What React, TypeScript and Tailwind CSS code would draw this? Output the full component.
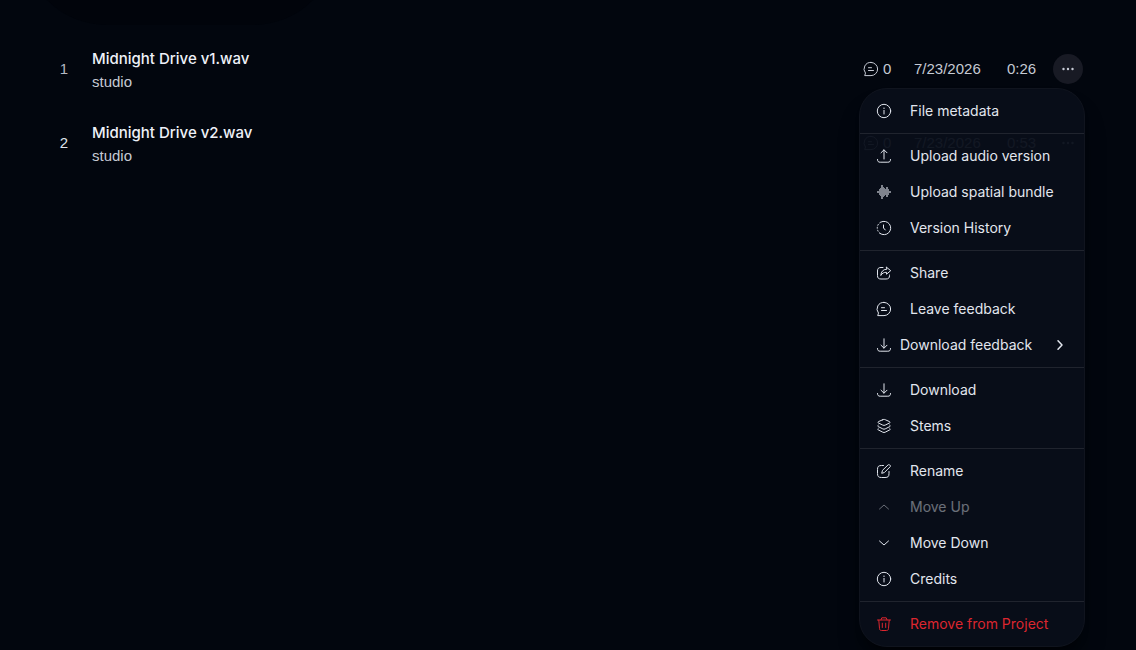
import type { ReactNode } from "react";

type IconName =
  | "info"
  | "upload"
  | "wave"
  | "history"
  | "share"
  | "chat"
  | "download"
  | "layers"
  | "edit"
  | "up"
  | "down"
  | "right"
  | "trash"
  | "dots";

const paths: Record<IconName, ReactNode> = {
  info: (
    <>
      <circle cx="8" cy="8" r="6.7" />
      <path d="M8 7.4v3.6" />
      <path d="M8 5v.6" />
    </>
  ),
  upload: <path d="M8 11V2M5 4.8 8 1.8l3 3M1.5 11.5c0 2 .8 2.7 2.7 2.7h7.6c1.9 0 2.7-.7 2.7-2.7" />,
  wave: (
    <path
      d="M1 7h2V5h1V4h1V1h2v2h1v1h1v1h1V3h2v2h1v2h2v2h-2v2h-1v2h-2v-2H9v1H8v1H7v2H5v-3H4v-1H3V9H1z"
      fill="currentColor"
      stroke="none"
      opacity="0.55"
    />
  ),
  history: (
    <>
      <path d="M5 2A6.7 6.7 0 1 1 4 13.4" />
      <path d="M4 13.4A6.7 6.7 0 0 1 5 2" strokeDasharray="1 2" />
      <path d="M7.5 5v3l1.8 2" />
    </>
  ),
  share: (
    <>
      <path d="M7 2.5H5C2.5 2.5 1.5 3.5 1.5 6v4.5c0 2.5 1 3.5 3.5 3.5h5c2.5 0 3.5-1 3.5-3.5V10" />
      <path d="M10.5 2.2 14.7 5.7l-4.2 3.5V7.3C8 7.2 6 8.2 4.8 10.5 5 6.8 7 4.3 10.5 4.2z" />
    </>
  ),
  chat: (
    <>
      <path d="M8 1.4a6.6 6.6 0 1 1 0 13.2H1.7l.8-2.5A6.6 6.6 0 0 1 8 1.4z" />
      <path d="M5.5 6.7h3M5.5 9.5h5" />
    </>
  ),
  download: <path d="M8 1.8V11M5 8.2l3 3 3-3M1.5 11.5c0 2 .8 2.7 2.7 2.7h7.6c1.9 0 2.7-.7 2.7-2.7" />,
  layers: (
    <>
      <path d="M6.8 1.7 2.5 3.6c-.8.4-.8 1 0 1.4l4.3 2.1c.8.4 1.6.4 2.4 0L13.5 5c.8-.4.8-1 0-1.4L9.2 1.7c-.8-.4-1.6-.4-2.4 0z" />
      <path d="M2.2 7.2c-.8.6-.6 1 .1 1.4l4.5 2.3c.8.4 1.6.4 2.4 0l4.5-2.3c.7-.4.9-.8.1-1.4" />
      <path d="M2.2 10.5c-.8.6-.6 1 .1 1.4l4.5 2.3c.8.4 1.6.4 2.4 0l4.5-2.3c.7-.4.9-.8.1-1.4" />
    </>
  ),
  edit: (
    <>
      <path d="M7.5 2.5h-2c-3 0-4 1-4 4v4c0 3 1 4 4 4H9c3 0 4-1 4-4v-2" />
      <path d="M12.3 1.7c.9-.8 2.8 1 1.9 2L8.3 9.6l-2.6.7.7-2.6z" />
    </>
  ),
  up: <path d="m3.5 10 4.5-4 4.5 4" />,
  down: <path d="m3.5 6 4.5 4 4.5-4" />,
  right: <path d="m6 3.8 4 4.2-4 4.2" strokeWidth="1.5" />,
  trash: (
    <>
      <path d="M1.5 4h13M5 3.8l.8-2h4.4l.8 2M2.8 4.2l.7 8.3c.1 1.4.7 2 2 2h5c1.3 0 1.9-.6 2-2l.7-8.3" />
      <path d="M6.3 7.2v4.3M9.7 7.2v4.3" />
    </>
  ),
  dots: <path d="M3.5 8h.01M8 8h.01M12.5 8h.01" strokeWidth="2.4" />,
};

function Icon({ name }: { name: IconName }) {
  return (
    <svg
      viewBox="0 0 16 16"
      className="size-4 shrink-0"
      fill="none"
      stroke="currentColor"
      strokeWidth="1"
      strokeLinecap="round"
      strokeLinejoin="round"
      aria-hidden="true"
    >
      {paths[name]}
    </svg>
  );
}

type Item = {
  icon: IconName;
  label: string;
  disabled?: boolean;
  danger?: boolean;
  submenu?: boolean;
};

const groups: Item[][] = [
  [{ icon: "info", label: "File metadata" }],
  [
    { icon: "upload", label: "Upload audio version" },
    { icon: "wave", label: "Upload spatial bundle" },
    { icon: "history", label: "Version History" },
  ],
  [
    { icon: "share", label: "Share" },
    { icon: "chat", label: "Leave feedback" },
    { icon: "download", label: "Download feedback", submenu: true },
  ],
  [
    { icon: "download", label: "Download" },
    { icon: "layers", label: "Stems" },
  ],
  [
    { icon: "edit", label: "Rename" },
    { icon: "up", label: "Move Up", disabled: true },
    { icon: "down", label: "Move Down" },
    { icon: "info", label: "Credits" },
  ],
  [{ icon: "trash", label: "Remove from Project", danger: true }],
];

function MenuItem({ item }: { item: Item }) {
  const color = item.danger ? "text-[#dc262f]" : "text-[#e2e6ee]";
  const gap = item.submenu ? "gap-2" : "gap-[18px]";
  return (
    <button
      type="button"
      role="menuitem"
      disabled={item.disabled}
      aria-haspopup={item.submenu ? "menu" : undefined}
      className={`flex h-9 w-full items-center px-4 text-left disabled:opacity-45 ${gap} ${color}`}
    >
      <Icon name={item.icon} />
      <span className="grow whitespace-nowrap">{item.label}</span>
      {item.submenu && <Icon name="right" />}
    </button>
  );
}

function TrackMenu() {
  return (
    <div
      role="menu"
      className="absolute top-full -right-0.5 z-10 mt-1 w-[226px] divide-y divide-[#20242e] rounded-[28px] border border-[#10141e] bg-[#080e19]/95 font-[Inter,sans-serif] text-[14px] shadow-xl shadow-black/40"
    >
      {groups.map((group) => (
        <div key={group[0].label} className="py-1">
          {group.map((item) => (
            <MenuItem key={item.label} item={item} />
          ))}
        </div>
      ))}
    </div>
  );
}

const tracks = [
  { name: "Midnight Drive v1.wav", artist: "studio", comments: 0, date: "7/23/2026", length: "0:26" },
  { name: "Midnight Drive v2.wav", artist: "studio", comments: 0, date: "7/23/2026", length: "0:53" },
];

export default function App() {
  return (
    <div className="min-h-screen overflow-hidden bg-[#02060e] font-['Liberation_Sans',sans-serif] text-[15px] leading-5 text-[#c6cad4]">
      {/* Bottom edge of the scrolled-away header pill */}
      <div className="flex h-[25px] items-end overflow-hidden pl-[22px]">
        <div className="h-[170px] w-[316px] shrink-0 rounded-[85px] bg-[#01040b]" />
      </div>

      <ol className="pt-[7px] pr-[53px] pl-10">
        {tracks.map((track, i) => (
          <li key={track.name} className="flex h-[74px] items-center gap-1">
            <span className={`w-12 text-center ${i === 0 ? "text-[#b4b8c2]" : "text-[#dfe3ec]"}`}>
              {i + 1}
            </span>
            <div className="grow pt-0.5">
              <p className="font-[Inter,sans-serif] text-[15px] leading-6 font-medium text-[#eef1f8]">
                {track.name}
              </p>
              <p className="leading-[22px]">{track.artist}</p>
            </div>
            <div className="flex items-center">
              <span className="flex w-[51px] items-center gap-1">
                <Icon name="chat" />
                {track.comments}
              </span>
              <span className="w-[93px]">{track.date}</span>
              <span className="w-[46px]">{track.length}</span>
              <div className="relative">
                <button
                  type="button"
                  aria-label={`Options for ${track.name}`}
                  className={`flex size-[30px] items-center justify-center rounded-full ${i === 0 ? "bg-[#181a24]" : ""}`}
                >
                  <Icon name="dots" />
                </button>
                {i === 0 && <TrackMenu />}
              </div>
            </div>
          </li>
        ))}
      </ol>
    </div>
  );
}
